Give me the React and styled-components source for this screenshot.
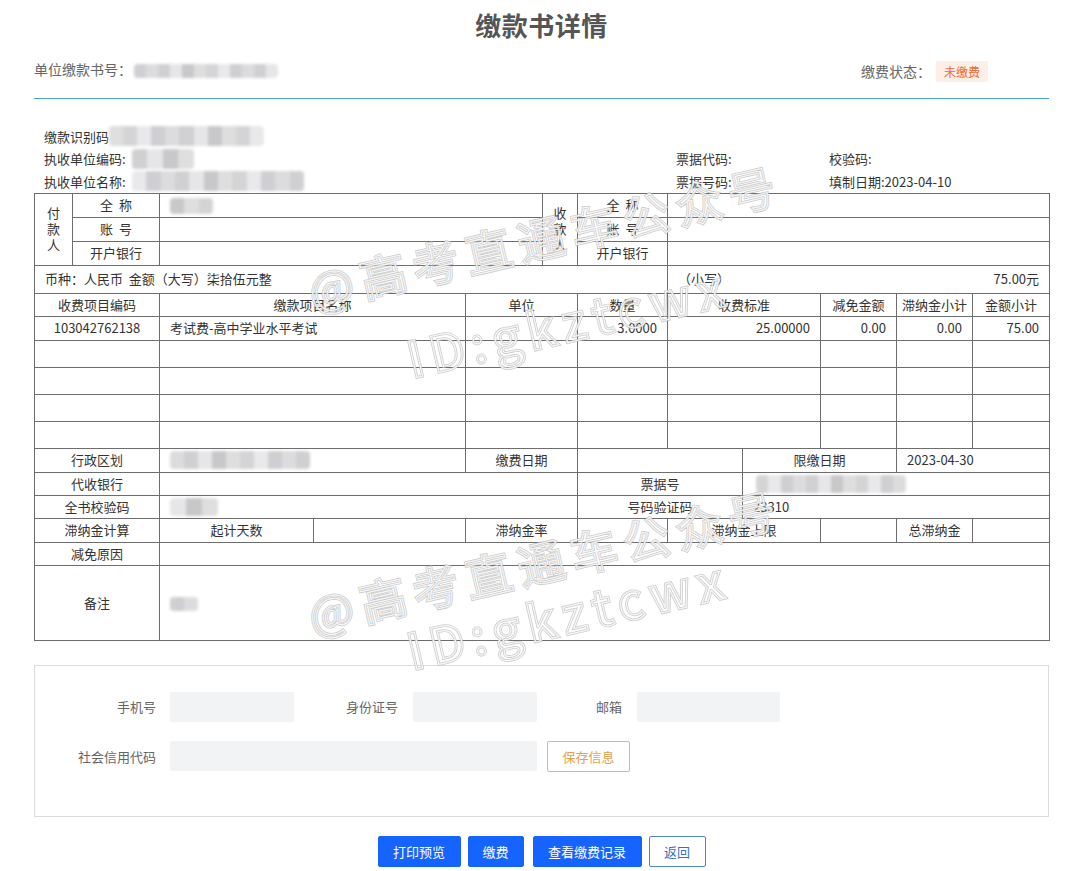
import React from 'react';
import styled, { createGlobalStyle } from 'styled-components';

const GlobalStyle = createGlobalStyle`
  body {
    margin: 0;
    background: #fff;
    font-family: "Noto Sans CJK SC", "Microsoft YaHei", "Liberation Sans", sans-serif;
    color: #333;
  }
`;

// gray mosaic used for the blurred-out values
const tonesFor = (seed, n) => {
    const list = ['#e6e6e8', '#d4d4d6', '#dcdcde', '#c8c8ca', '#e9e9eb', '#d0cfd1', '#dedede', '#cfcfd3'];
    const stops = [];
    for (let i = 0; i < n; i++) {
        const c = list[(seed * 7 + i * 3) % list.length];
        stops.push(`${c} ${(i * 100) / n}% ${((i + 1) * 100) / n}%`);
    }
    return `linear-gradient(90deg, ${stops.join(', ')})`;
};

const Blur = styled.span`
    display: inline-block;
    vertical-align: middle;
    width: ${p => p.$w}px;
    height: ${p => p.$h}px;
    margin-left: ${p => p.$ml || 0}px;
    background: ${p => p.$bg};
    filter: blur(1.4px);
    border-radius: 4px;
`;

const Page = styled.div`
    position: relative;
    width: 1080px;
    box-sizing: border-box;
    padding: 0 31px 5px 34px;
    overflow: hidden;
`;

const Title = styled.h1`
    margin: 0;
    height: 50px;
    line-height: 50px;
    text-align: center;
    font-size: 26px;
    font-weight: 700;
    color: #555;
    letter-spacing: 0.5px;
`;

const HeaderRow = styled.div`
    display: flex;
    justify-content: space-between;
    align-items: center;
    height: 38px;
    padding-bottom: 10px;
    border-bottom: 1px solid #4ba3d5;
    font-size: 14px;
    color: #666;
`;

const Status = styled.div`
    display: flex;
    align-items: center;
    margin-right: 61px;
    margin-top: 4px;
`;

const Badge = styled.span`
    margin-left: 5px;
    height: 21px;
    line-height: 21px;
    padding: 0 8px;
    background: #fdefe6;
    color: #ee6a3c;
    font-size: 12px;
    border-radius: 2px;
`;

const Info = styled.div`
    display: grid;
    grid-template-columns: 632px 153px 1fr;
    grid-auto-rows: 22.5px;
    align-items: center;
    padding: 26px 0 0 10px;
    font-size: 13px;
    color: #333;
`;

const InfoCell = styled.div`
    white-space: nowrap;
    display: flex;
    align-items: center;
`;

const Table = styled.table`
    width: 1015px;
    table-layout: fixed;
    border-collapse: collapse;
    font-size: 13px;
    color: #333;
`;

const Row = styled.tr`
    height: ${p => p.$h}px;
`;

const Cell = styled.td`
    border: 1px solid #6d6d6d;
    padding: 0 10px;
    text-align: ${p => p.$align || 'center'};
    vertical-align: middle;
    white-space: nowrap;
    overflow: hidden;
    line-height: 16px;
`;

const Vertical = styled.span`
    display: block;
    width: 1em;
    margin: 0 auto;
    line-height: 16px;
    white-space: normal;
`;

const Split = styled.div`
    display: flex;
    justify-content: space-between;
`;

const FormBox = styled.div`
    margin-top: 24px;
    border: 1px solid #dcdcdc;
    padding: 26px 0 44px;
    display: flex;
    flex-direction: column;
    gap: 19px;
`;

const FormRow = styled.div`
    display: flex;
    align-items: center;
`;

const Label = styled.label`
    width: ${p => p.$w}px;
    margin-right: ${p => p.$gap}px;
    text-align: right;
    font-size: 13px;
    color: #666;
    flex-shrink: 0;
`;

const Input = styled.div`
    width: ${p => p.$w}px;
    height: 30px;
    background: #f2f3f5;
    border-radius: 2px;
    flex-shrink: 0;
`;

const SaveButton = styled.button`
    margin-left: 10px;
    width: 83px;
    height: 31px;
    border: 1px solid #f0b264;
    border-radius: 2px;
    background: #fff;
    color: #e9a04a;
    font-family: inherit;
    font-size: 13px;
    padding: 0;
`;

const Actions = styled.div`
    display: flex;
    justify-content: center;
    margin-top: 19px;
`;

const ActionButton = styled.button`
    height: 31px;
    width: ${p => p.$w}px;
    margin: 0 ${p => p.$mr || 0}px 0 0;
    padding: 0;
    border-radius: 2px;
    font-family: inherit;
    font-size: 13px;
    border: 1px solid ${p => (p.$ghost ? '#4e85d3' : '#1664ff')};
    background: ${p => (p.$ghost ? '#fff' : '#1664ff')};
    color: ${p => (p.$ghost ? '#3a6fc4' : '#fff')};
`;

// hollow, double-outlined watermark text laid over the page
const Watermark = styled.div`
    position: absolute;
    left: ${p => p.$x}px;
    top: ${p => p.$y}px;
    transform: translate(-50%, -50%) rotate(-13deg);
    font-size: ${p => p.$size}px;
    font-weight: 500;
    letter-spacing: ${p => p.$ls}px;
    white-space: nowrap;
    pointer-events: none;
    font-family: "Noto Sans CJK SC", "DejaVu Sans", sans-serif;
    color: transparent;
    -webkit-text-stroke: 2.8px rgba(185, 185, 185, 0.75);

    &::before {
        content: attr(data-text);
        position: absolute;
        left: 0;
        top: 0;
        -webkit-text-stroke: 1.2px rgba(255, 255, 255, 0.85);
    }
`;

const cols = [38, 87, 154, 152, 77, 35, 90, 75, 78, 76, 76, 77];

const items = [
    { code: '103042762138', name: '考试费-高中学业水平考试', unit: '', qty: '3.0000', std: '25.00000', off: '0.00', late: '0.00', sum: '75.00' },
    {}, {}, {}, {},
];
const itemHeights = [24, 27, 27, 27, 27];

const marks = [
    { x: 545, y: 236, size: 46, ls: 8, text: '@高考直通车公众号' },
    { x: 568, y: 320, size: 50, ls: 7, text: 'ID:gkztcwx' },
    { x: 545, y: 560, size: 46, ls: 8, text: '@高考直通车公众号' },
    { x: 568, y: 612, size: 50, ls: 7, text: 'ID:gkztcwx' },
];

function App() {
    return (
        <Page>
            <GlobalStyle />
            <Title>缴款书详情</Title>

            <HeaderRow>
                <div>
                    单位缴款书号：
                    <Blur $w={144} $h={14} $ml={2} $bg={tonesFor(1, 12)} />
                </div>
                <Status>
                    缴费状态：
                    <Badge>未缴费</Badge>
                </Status>
            </HeaderRow>

            <Info>
                <InfoCell>
                    缴款识别码
                    <Blur $w={155} $h={20} $bg={tonesFor(2, 11)} />
                </InfoCell>
                <InfoCell />
                <InfoCell />
                <InfoCell>
                    执收单位编码:
                    <Blur $w={62} $h={20} $ml={6} $bg={tonesFor(3, 4)} />
                </InfoCell>
                <InfoCell>票据代码:</InfoCell>
                <InfoCell>校验码:</InfoCell>
                <InfoCell>
                    执收单位名称:
                    <Blur $w={172} $h={20} $ml={6} $bg={tonesFor(4, 12)} />
                </InfoCell>
                <InfoCell>票据号码:</InfoCell>
                <InfoCell>填制日期:2023-04-10</InfoCell>
            </Info>

            <Table>
                <colgroup>
                    {cols.map((w, i) => <col key={i} style={{ width: w }} />)}
                </colgroup>
                <tbody>
                    <Row $h={24}>
                        <Cell rowSpan={3} style={{ padding: 0 }}><Vertical>付款人</Vertical></Cell>
                        <Cell>全&nbsp;&nbsp;称</Cell>
                        <Cell colSpan={3} $align="left"><Blur $w={43} $h={16} $bg={tonesFor(5, 3)} /></Cell>
                        <Cell rowSpan={3} style={{ padding: 0 }}><Vertical>收款人</Vertical></Cell>
                        <Cell>全&nbsp;&nbsp;称</Cell>
                        <Cell colSpan={5} />
                    </Row>
                    <Row $h={24}>
                        <Cell>账&nbsp;&nbsp;号</Cell>
                        <Cell colSpan={3} />
                        <Cell>账&nbsp;&nbsp;号</Cell>
                        <Cell colSpan={5} />
                    </Row>
                    <Row $h={24}>
                        <Cell>开户银行</Cell>
                        <Cell colSpan={3} />
                        <Cell>开户银行</Cell>
                        <Cell colSpan={5} />
                    </Row>
                    <Row $h={28}>
                        <Cell colSpan={7} $align="left">币种：人民币&nbsp;&nbsp;金额（大写）柒拾伍元整</Cell>
                        <Cell colSpan={5} $align="left">
                            <Split>
                                <span>（小写）</span>
                                <span>75.00元</span>
                            </Split>
                        </Cell>
                    </Row>
                    <Row $h={23}>
                        <Cell colSpan={2}>收费项目编码</Cell>
                        <Cell colSpan={2}>缴款项目名称</Cell>
                        <Cell colSpan={2}>单位</Cell>
                        <Cell>数量</Cell>
                        <Cell colSpan={2}>收费标准</Cell>
                        <Cell>减免金额</Cell>
                        <Cell style={{ padding: 0 }}>滞纳金小计</Cell>
                        <Cell>金额小计</Cell>
                    </Row>
                    {items.map((it, i) => (
                        <Row key={i} $h={itemHeights[i]}>
                            <Cell colSpan={2}>{it.code}</Cell>
                            <Cell colSpan={2} $align="left">{it.name}</Cell>
                            <Cell colSpan={2}>{it.unit}</Cell>
                            <Cell $align="right">{it.qty}</Cell>
                            <Cell colSpan={2} $align="right">{it.std}</Cell>
                            <Cell $align="right">{it.off}</Cell>
                            <Cell $align="right">{it.late}</Cell>
                            <Cell $align="right">{it.sum}</Cell>
                        </Row>
                    ))}
                    <Row $h={24}>
                        <Cell colSpan={2}>行政区划</Cell>
                        <Cell colSpan={2} $align="left"><Blur $w={140} $h={18} $bg={tonesFor(6, 10)} /></Cell>
                        <Cell colSpan={2}>缴费日期</Cell>
                        <Cell colSpan={2} />
                        <Cell colSpan={2}>限缴日期</Cell>
                        <Cell colSpan={2} $align="left">2023-04-30</Cell>
                    </Row>
                    <Row $h={23}>
                        <Cell colSpan={2}>代收银行</Cell>
                        <Cell colSpan={4} />
                        <Cell colSpan={2}>票据号</Cell>
                        <Cell colSpan={4} $align="left" style={{ paddingLeft: 13 }}><Blur $w={150} $h={18} $bg={tonesFor(7, 12)} /></Cell>
                    </Row>
                    <Row $h={23}>
                        <Cell colSpan={2}>全书校验码</Cell>
                        <Cell colSpan={4} $align="left"><Blur $w={48} $h={18} $bg={tonesFor(8, 3)} /></Cell>
                        <Cell colSpan={2}>号码验证码</Cell>
                        <Cell colSpan={4} $align="left">23310</Cell>
                    </Row>
                    <Row $h={24}>
                        <Cell colSpan={2}>滞纳金计算</Cell>
                        <Cell>起计天数</Cell>
                        <Cell />
                        <Cell colSpan={2}>滞纳金率</Cell>
                        <Cell />
                        <Cell colSpan={2}>滞纳金上限</Cell>
                        <Cell />
                        <Cell>总滞纳金</Cell>
                        <Cell />
                    </Row>
                    <Row $h={23}>
                        <Cell colSpan={2}>减免原因</Cell>
                        <Cell colSpan={10} />
                    </Row>
                    <Row $h={75}>
                        <Cell colSpan={2}>备注</Cell>
                        <Cell colSpan={10} $align="left"><Blur $w={28} $h={14} $bg={tonesFor(9, 2)} /></Cell>
                    </Row>
                </tbody>
            </Table>

            <FormBox>
                <FormRow>
                    <Label $w={121} $gap={14}>手机号</Label>
                    <Input $w={124} />
                    <Label $w={104} $gap={15}>身份证号</Label>
                    <Input $w={124} />
                    <Label $w={85} $gap={15}>邮箱</Label>
                    <Input $w={143} />
                </FormRow>
                <FormRow>
                    <Label $w={121} $gap={14}>社会信用代码</Label>
                    <Input $w={367} />
                    <SaveButton>保存信息</SaveButton>
                </FormRow>
            </FormBox>

            <Actions>
                <ActionButton $w={83} $mr={7}>打印预览</ActionButton>
                <ActionButton $w={56} $mr={9}>缴费</ActionButton>
                <ActionButton $w={109} $mr={7}>查看缴费记录</ActionButton>
                <ActionButton $w={57} $ghost>返回</ActionButton>
            </Actions>

            {marks.map((m, i) => (
                <Watermark key={i} $x={m.x} $y={m.y} $size={m.size} $ls={m.ls} data-text={m.text}>
                    {m.text}
                </Watermark>
            ))}
        </Page>
    );
}

export default App;
